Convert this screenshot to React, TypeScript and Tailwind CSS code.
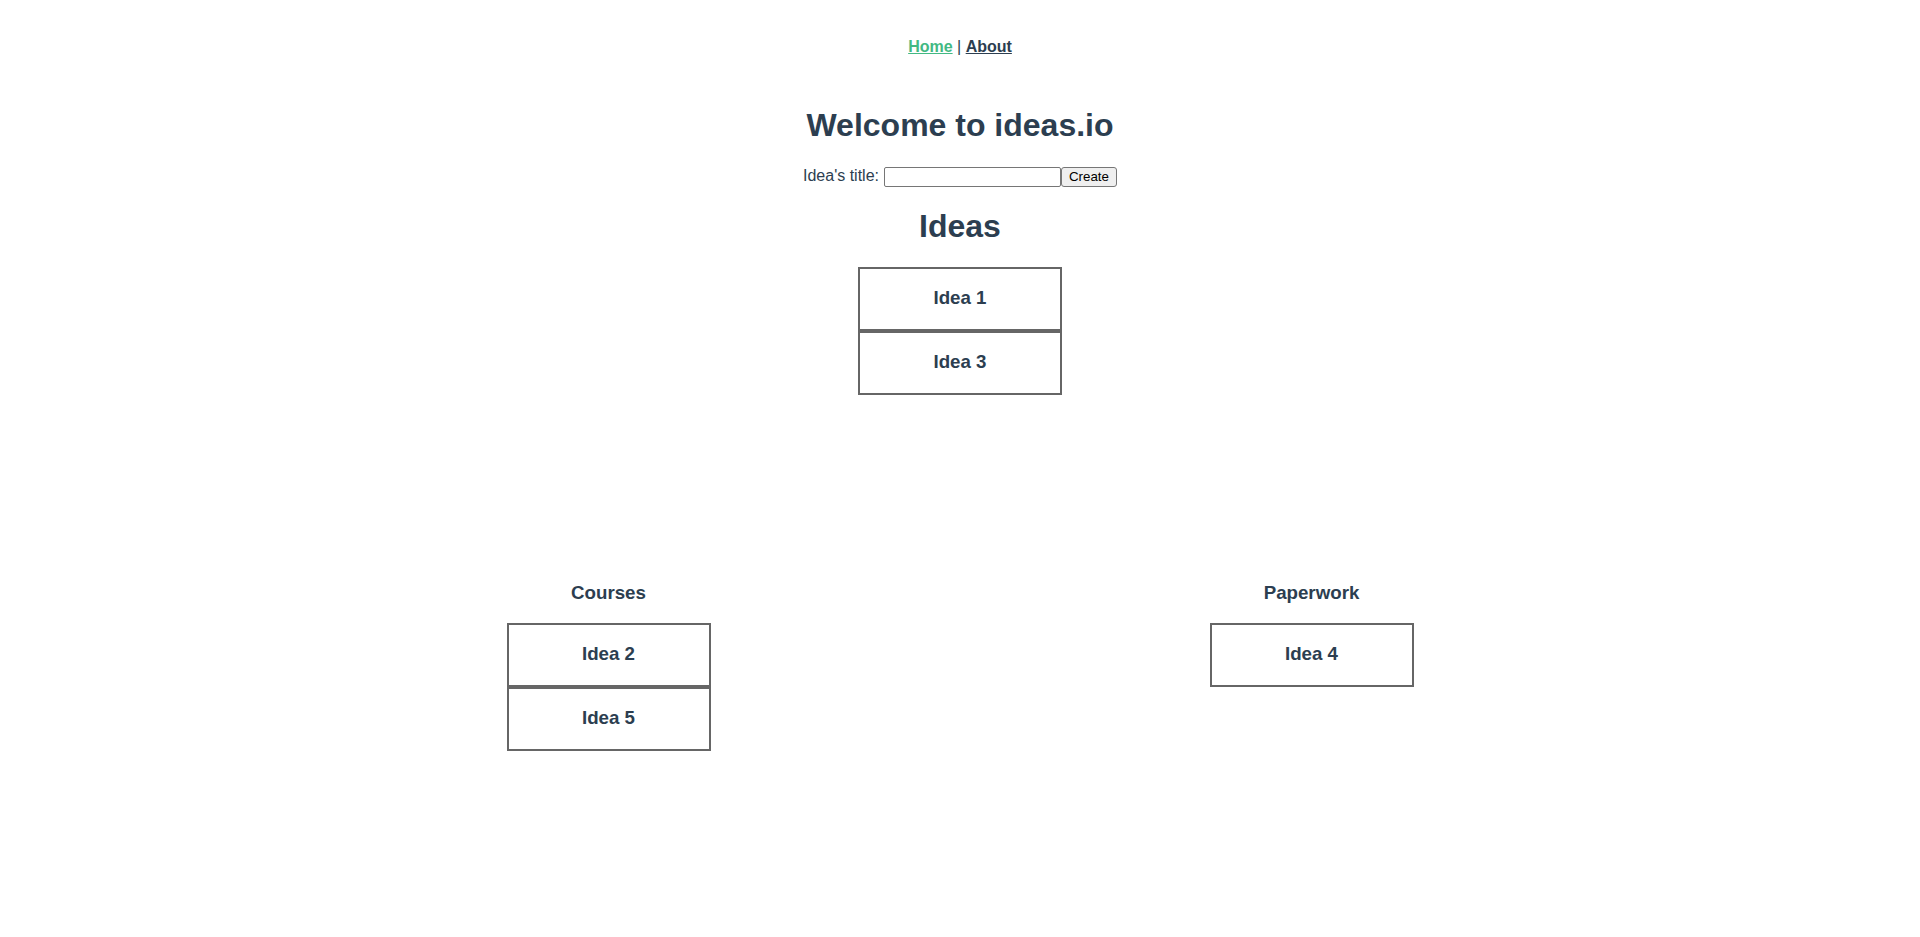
const ideas = ['Idea 1', 'Idea 3'];

const columns = [
  { title: 'Courses', items: ['Idea 2', 'Idea 5'] },
  { title: 'Paperwork', items: ['Idea 4'] },
];

function IdeaCard({ title }: { title: string }) {
  return (
    <div className="w-[204px] h-[64px] border-2 border-[#666] flex items-center justify-center pb-[2px]">
      <h3 className="text-[18.72px] font-bold leading-[22px]">{title}</h3>
    </div>
  );
}

export default function App() {
  return (
    <div
      className="min-h-[937px] bg-white text-[#2c3e50] text-center"
      style={{ fontFamily: '"Liberation Sans", Arial, Helvetica, sans-serif' }}
    >
      <nav className="pt-[38px] text-[16px] leading-[18px]">
        <a href="#" className="font-bold text-[#42b983] underline">
          Home
        </a>{' '}
        |{' '}
        <a href="#" className="font-bold text-[#2c3e50] underline">
          About
        </a>
      </nav>

      <h1 className="mt-[50px] text-[32px] font-bold leading-[38px]">Welcome to ideas.io</h1>

      <div className="mt-[23px] flex items-center justify-center h-[20px] text-[16px]">
        <label className="mr-[5px] leading-[18px] pb-[2px]">Idea's title:</label>
        <input
          type="text"
          className="w-[177px] h-[20px] border border-[#767676] rounded-[2px] bg-white px-[2px] text-[13.33px] outline-none"
        />
        <button className="w-[56px] h-[20px] border border-[#767676] rounded-[3px] bg-[#efefef] text-[13.33px] leading-[16px] text-black">
          Create
        </button>
      </div>

      <h2 className="mt-[20px] text-[32px] font-bold leading-[38px]">Ideas</h2>

      <div className="mt-[22px] flex flex-col items-center">
        {ideas.map((idea) => (
          <IdeaCard key={idea} title={idea} />
        ))}
      </div>

      <div className="mt-[187px] w-[1406px] mx-auto flex justify-around items-start">
        {columns.map((col) => (
          <div key={col.title} className="w-[204px] flex flex-col items-center">
            <h3 className="text-[18.72px] font-bold leading-[22px]">{col.title}</h3>
            <div className="mt-[19px] flex flex-col">
              {col.items.map((item) => (
                <IdeaCard key={item} title={item} />
              ))}
            </div>
          </div>
        ))}
      </div>
    </div>
  );
}
